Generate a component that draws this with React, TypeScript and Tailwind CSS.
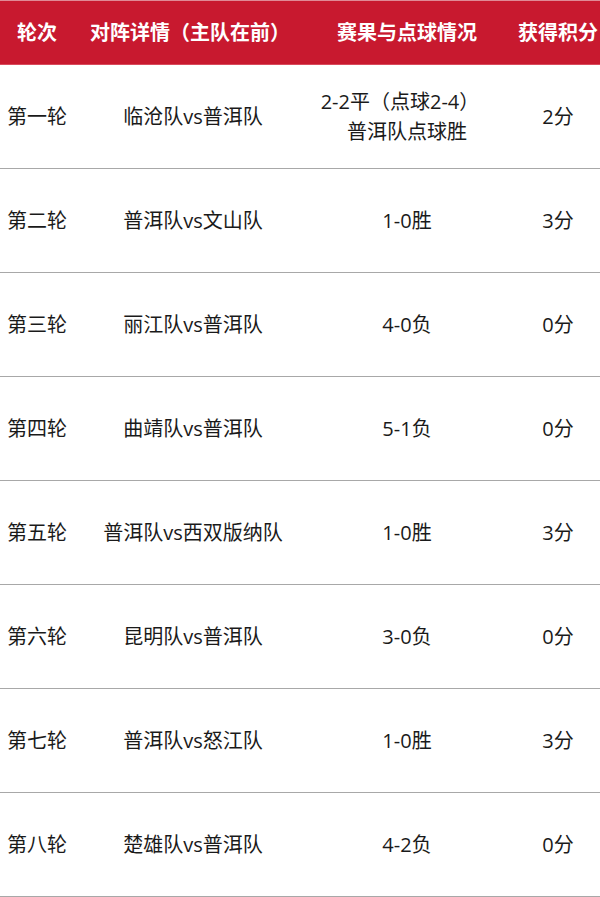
import React from "react";

const rows = [
  ["第一轮", "临沧队vs普洱队", ["2-2平（点球2-4）", "普洱队点球胜"], "2分"],
  ["第二轮", "普洱队vs文山队", ["1-0胜"], "3分"],
  ["第三轮", "丽江队vs普洱队", ["4-0负"], "0分"],
  ["第四轮", "曲靖队vs普洱队", ["5-1负"], "0分"],
  ["第五轮", "普洱队vs西双版纳队", ["1-0胜"], "3分"],
  ["第六轮", "昆明队vs普洱队", ["3-0负"], "0分"],
  ["第七轮", "普洱队vs怒江队", ["1-0胜"], "3分"],
  ["第八轮", "楚雄队vs普洱队", ["4-2负"], "0分"],
] as const;

export default function App() {
  return (
    <div
      className="w-[600px] h-[897px] overflow-hidden bg-white text-[#1a1a1a]"
      style={{ fontFamily: '"Open Sans", "Noto Sans CJK SC", sans-serif' }}
    >
      <div className="grid grid-cols-[74px_238px_190px_98px] h-[65px] bg-[#c8192f] border-t border-[#e08a96] border-b border-b-[#d94a5c] text-white font-bold text-[20px] items-center">
        <div className="text-center">轮次</div>
        <div className="text-center pr-[6px]">对阵详情（主队在前）</div>
        <div className="text-center">赛果与点球情况</div>
        <div className="text-center pl-[14px] whitespace-nowrap">获得积分</div>
      </div>
      {rows.map((r, i) => (
        <div
          key={i}
          className="grid grid-cols-[74px_238px_190px_98px] h-[104px] border-b border-[#a8a8a8] items-center text-[20px] leading-[30px]"
        >
          <div className="text-center">{r[0]}</div>
          <div className="text-center">{r[1]}</div>
          <div className="text-center">
            {r[2].map((t, j) => (
              <div key={j} className={j === 0 && r[2].length > 1 ? "pr-[14px]" : ""}>{t}</div>
            ))}
          </div>
          <div className="text-center pl-[14px]">{r[3]}</div>
        </div>
      ))}
    </div>
  );
}
